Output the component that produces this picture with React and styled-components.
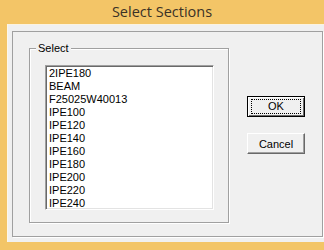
import React from "react";
import styled, { createGlobalStyle } from "styled-components";

const GlobalStyle = createGlobalStyle`
    html, body {
        margin: 0;
        padding: 0;
        overflow: hidden;
        background: #f0c465;
    }
`;

const Window = styled.div`
    width: 324px;
    height: 250px;
    background: #f3c567;
    display: flex;
    flex-direction: column;
    box-sizing: border-box;
    padding: 0 0 8px 7px;
    font-family: "Liberation Sans", Arial, sans-serif;
`;

const TitleBar = styled.div`
    height: 24px;
    display: flex;
    align-items: center;
    justify-content: center;
    margin-left: -7px;
    font-family: "Open Sans", "Noto Sans", sans-serif;
    font-size: 14.5px;
    color: #3a3226;
    padding-bottom: 1px;
    box-sizing: border-box;
`;

const Client = styled.div`
    flex: 1;
    background: #f0f0f0;
    border-top: 1px solid #fbf3e0;
    border-left: 1px solid #fdf7ea;
    padding: 6px 1px 5px 4px;
    display: flex;
    box-sizing: border-box;
`;

const Frame = styled.div`
    flex: 1;
    border: 1px solid #a0a0a0;
    box-shadow: 1px 1px 0 #ffffff;
    display: flex;
    align-items: flex-start;
    padding: 16px 0 0 16px;
    gap: 18px;
`;

const GroupBox = styled.div`
    position: relative;
    flex: none;
    width: 183px;
    height: 157px;
    border: 1px solid #a0a0a0;
    box-shadow: inset 1px 1px 0 #ffffff, 1px 1px 0 #ffffff;
    padding: 16px 0 0 15px;
`;

const Legend = styled.span`
    position: absolute;
    top: -7px;
    left: 6px;
    padding: 0 2px;
    background: #f0f0f0;
    font-size: 11px;
    line-height: 13px;
    color: #000;
`;

const ListBox = styled.div`
    width: 166px;
    height: 142px;
    background: #fff;
    border-top: 1px solid #a0a0a0;
    border-left: 1px solid #a0a0a0;
    border-right: 1px solid #ffffff;
    border-bottom: 1px solid #ffffff;
    box-shadow: inset 1px 1px 0 #696969, inset -1px -1px 0 #e3e3e3;
    overflow: hidden;
    padding: 1px 0 0 1px;
`;

const Item = styled.div`
    height: 13px;
    line-height: 13px;
    font-size: 11px;
    padding-left: 2px;
    color: #000;
    white-space: nowrap;
`;

const ButtonColumn = styled.div`
    display: flex;
    flex-direction: column;
    gap: 16px;
    padding-top: 48px;
`;

const Button = styled.button`
    width: 58px;
    height: 21px;
    padding: 0;
    font-family: "Liberation Sans", Arial, sans-serif;
    font-size: 11px;
    color: #000;
    background: #f0f0f0;
    border: 1px solid;
    border-color: ${p => p.$default ? "#000" : "#fff #696969 #696969 #fff"};
    box-shadow: ${p => p.$default
        ? "inset 1px 1px 0 #fff, inset -1px -1px 0 #696969"
        : "inset -1px -1px 0 #a0a0a0"};
    display: flex;
    align-items: center;
    justify-content: center;
`;

const Focus = styled.span`
    border: 1px dotted #000;
    width: 48px;
    height: 13px;
    line-height: 13px;
    text-align: center;
`;

const sections = [
    "2IPE180", "BEAM", "F25025W40013", "IPE100", "IPE120", "IPE140",
    "IPE160", "IPE180", "IPE200", "IPE220", "IPE240",
];

export default function App() {
    return (
        <>
            <GlobalStyle />
            <Window>
                <TitleBar>Select Sections</TitleBar>
                <Client>
                    <Frame>
                        <GroupBox>
                            <Legend>Select</Legend>
                            <ListBox>
                                {sections.map(s => <Item key={s}>{s}</Item>)}
                            </ListBox>
                        </GroupBox>
                        <ButtonColumn>
                            <Button $default><Focus>OK</Focus></Button>
                            <Button>Cancel</Button>
                        </ButtonColumn>
                    </Frame>
                </Client>
            </Window>
        </>
    );
}
